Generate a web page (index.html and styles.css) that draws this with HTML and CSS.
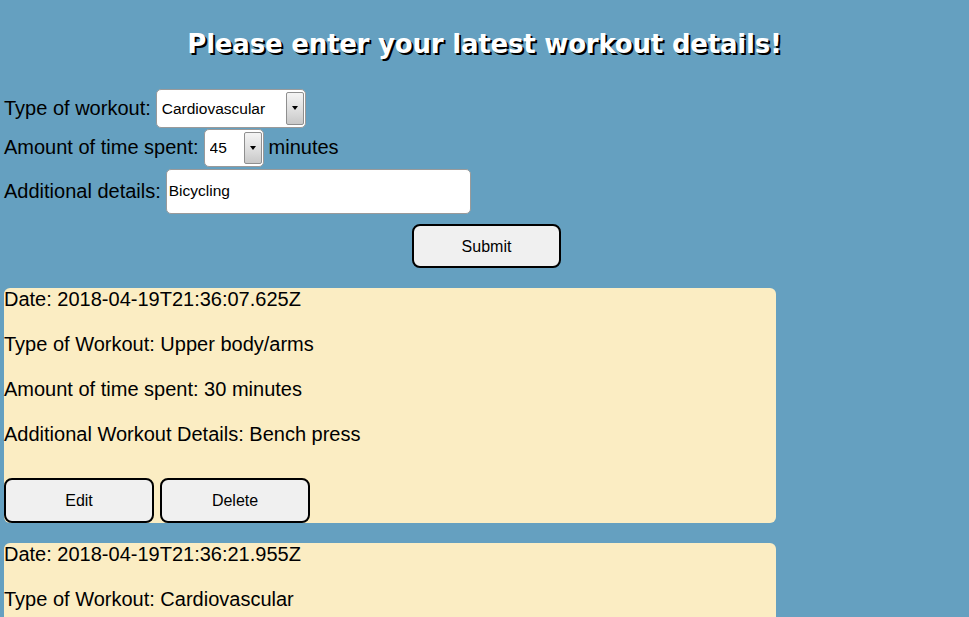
FILE: index.html
```html
<!DOCTYPE html>
<html>
<head>
<meta charset="utf-8">
<link rel="stylesheet" href="styles.css">
</head>
<body>
<h1 class="title">Please enter your latest workout details!</h1>
<form class="form">
  <div class="row row-type">
    <label class="label">Type of workout:</label>
    <span class="select-wrap select-type">
      <select class="select"><option>Cardiovascular</option></select>
      <span class="arrow"><span class="tri"></span></span>
    </span>
  </div>
  <div class="row row-time">
    <label class="label">Amount of time spent:</label>
    <span class="select-wrap select-time">
      <select class="select"><option>45</option></select>
      <span class="arrow"><span class="tri"></span></span>
    </span>
    <span class="label">minutes</span>
  </div>
  <div class="row row-details">
    <label class="label">Additional details:</label>
    <input class="text-input" type="text" value="Bicycling">
  </div>
  <div class="submit-row">
    <button type="button" class="btn btn-submit">Submit</button>
  </div>
</form>
<div class="cards">
  <div class="card">
    <div class="card-lines">
      <p class="line">Date: 2018-04-19T21:36:07.625Z</p>
      <p class="line">Type of Workout: Upper body/arms</p>
      <p class="line">Amount of time spent: 30 minutes</p>
      <p class="line">Additional Workout Details: Bench press</p>
    </div>
    <div class="card-actions">
      <button type="button" class="btn btn-card">Edit</button>
      <button type="button" class="btn btn-card">Delete</button>
    </div>
  </div>
  <div class="card card-partial">
    <div class="card-lines">
      <p class="line">Date: 2018-04-19T21:36:21.955Z</p>
      <p class="line">Type of Workout: Cardiovascular</p>
    </div>
  </div>
</div>
</body>
</html>
```

FILE: styles.css
```css
html, body {
  margin: 0;
  padding: 0;
}
body {
  background: #65a0c0;
  font-family: "Liberation Sans", Arial, sans-serif;
  font-size: 20px;
  color: #000;
  padding: 0 4px;
}
.title {
  margin: 0;
  padding-top: 28px;
  height: 62px;
  box-sizing: border-box;
  text-align: center;
  font-family: "DejaVu Sans", sans-serif;
  font-weight: bold;
  font-size: 26px;
  line-height: 32px;
  color: #fff;
  text-shadow: 2px 2px 0 #000;
  letter-spacing: -0.2px;
}
.form {
  margin: 0;
  padding-top: 26px;
}
.row {
  display: flex;
  align-items: center;
  gap: 5px;
}
.row-type { height: 40px; }
.row-time { height: 39px; }
.row-details { height: 46px; margin-top: 1px; }
.label {
  line-height: 23px;
}
.select-wrap {
  position: relative;
  display: inline-block;
  background: #fff;
  border: 1px solid #9a9a9a;
  border-radius: 5px;
  box-sizing: border-box;
}
.select-type { width: 150px; height: 39px; }
.select-time { width: 60px; height: 38px; }
.select {
  appearance: none;
  -webkit-appearance: none;
  border: none;
  background: transparent;
  font-family: "Liberation Sans", Arial, sans-serif;
  font-size: 15.5px;
  color: #000;
  width: 100%;
  height: 100%;
  padding: 0 0 0 5px;
  margin: 0;
  outline: none;
}
.arrow {
  position: absolute;
  top: 2px;
  right: 1px;
  bottom: 2px;
  width: 16px;
  border: 1px solid #8f8f8f;
  border-radius: 2px;
  background: linear-gradient(to bottom, #f4f4f4 0%, #dcdcdc 60%, #c8c8c8 100%);
  display: flex;
  align-items: center;
  justify-content: center;
}
.tri {
  width: 0;
  height: 0;
  border-left: 3px solid transparent;
  border-right: 3px solid transparent;
  border-top: 4px solid #000;
}
.text-input {
  width: 305px;
  height: 45px;
  box-sizing: border-box;
  border: 1px solid #9a9a9a;
  border-radius: 5px;
  background: #fff;
  font-family: "Liberation Sans", Arial, sans-serif;
  font-size: 15.5px;
  padding: 0 0 0 2px;
  margin: 0;
  outline: none;
}
.submit-row {
  display: flex;
  justify-content: center;
  padding-top: 10px;
  padding-left: 4px;
}
.btn {
  background: #f0f0f0;
  border: 2px solid #000;
  border-radius: 8px;
  font-family: "Liberation Sans", Arial, sans-serif;
  font-size: 16px;
  color: #000;
  box-sizing: border-box;
  margin: 0;
  padding: 0;
}
.btn-submit {
  width: 149px;
  height: 44px;
  padding-top: 1px;
}
.cards {
  padding-top: 20px;
  display: flex;
  flex-direction: column;
  gap: 20px;
}
.card {
  width: 772px;
  background: #fbedc3;
  border-radius: 6px;
}
.card-partial {
  border-radius: 6px 6px 0 0;
  padding-bottom: 6px;
}
.card-lines {
  display: flex;
  flex-direction: column;
  gap: 22px;
}
.line {
  margin: 0;
  line-height: 23px;
}
.card-actions {
  display: flex;
  gap: 6px;
  padding-top: 32px;
}
.btn-card {
  width: 150px;
  height: 45px;
}
```
